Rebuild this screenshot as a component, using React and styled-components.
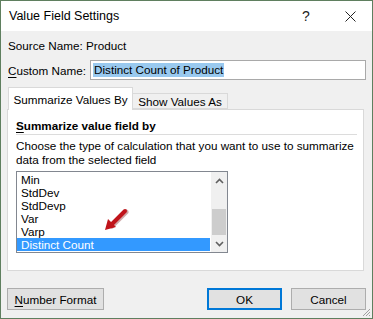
import React from 'react';
import styled, { createGlobalStyle } from 'styled-components';

const GlobalStyle = createGlobalStyle`
  html, body {
    margin: 0;
    padding: 0;
    background: #ffffff;
  }
  body {
    font-family: "Liberation Sans", Arial, sans-serif;
    font-size: 11.7px;
    color: #000000;
  }
`;

const Window = styled.div`
  width: 373px;
  height: 319px;
  box-sizing: border-box;
  border: 1px solid #5f7f5f;
  background: #f0f0f0;
  display: flex;
  flex-direction: column;
  position: relative;
  white-space: nowrap;
`;

const TitleBar = styled.div`
  height: 30px;
  background: #ffffff;
  display: flex;
  align-items: center;
  padding-left: 8px;
  font-size: 12.5px;
`;

const TitleText = styled.div`
  flex: 1;
`;

const TitleButton = styled.div`
  width: 44px;
  height: 30px;
  display: flex;
  align-items: center;
  justify-content: center;
  font-size: 14px;
  color: #222;
`;

const Body = styled.div`
  flex: 1;
  display: flex;
  flex-direction: column;
  padding: 0 6px;
`;

const FieldRow = styled.div`
  display: flex;
  align-items: center;
  height: ${p => p.h}px;
  margin-top: ${p => p.mt}px;
  padding-left: 1px;
`;

const Label = styled.div`
  width: ${p => p.w}px;
  flex-shrink: 0;
`;

const NameInput = styled.div`
  width: 276px;
  height: 20px;
  box-sizing: border-box;
  border: 1px solid #a9a9a9;
  background: #ffffff;
  display: flex;
  align-items: center;
  padding-left: 2px;
`;

const Selected = styled.span`
  background: #99c9ef;
  line-height: 14px;
  padding: 0 1px;
`;

const TabStrip = styled.div`
  display: flex;
  align-items: flex-end;
  height: 22px;
  margin-top: 7px;
  padding-left: 1px;
  position: relative;
  z-index: 1;
`;

const Tab = styled.div`
  box-sizing: border-box;
  width: ${p => p.w}px;
  height: ${p => (p.active ? 23 : 16)}px;
  margin-bottom: ${p => (p.active ? -1 : 0)}px;
  background: ${p => (p.active ? '#ffffff' : '#f0f0f0')};
  border: 1px solid #d9d9d9;
  border-bottom: ${p => (p.active ? 'none' : '1px solid #d9d9d9')};
  border-left: ${p => (p.first ? '1px solid #d9d9d9' : 'none')};
  display: flex;
  align-items: center;
  justify-content: center;
  padding-top: ${p => (p.active ? 0 : 1)}px;
`;

const Panel = styled.div`
  margin-right: 2px;
  height: 162px;
  box-sizing: border-box;
  background: #ffffff;
  border: 1px solid #d9d9d9;
  padding: 0 6px 0 8px;
  display: flex;
  flex-direction: column;
`;

const Heading = styled.div`
  font-weight: bold;
  height: 16px;
  margin-top: 7px;
  padding-bottom: 1px;
  border-bottom: 1px solid #dcdcdc;
  display: flex;
  align-items: center;
`;

const Description = styled.div`
  margin-top: 4px;
  line-height: 14px;
`;

const ListBox = styled.div`
  position: relative;
  margin-top: 4px;
  width: 212px;
  height: 82px;
  box-sizing: border-box;
  border: 1px solid #828790;
  display: flex;
`;

const Items = styled.div`
  flex: 1;
  padding-top: 1px;
  display: flex;
  flex-direction: column;
`;

const Item = styled.div`
  height: 13px;
  line-height: 13px;
  padding-left: 4px;
  background: ${p => (p.selected ? '#3399ff' : 'transparent')};
  color: ${p => (p.selected ? '#ffffff' : '#000000')};
  margin-right: 1px;
`;

const ScrollBar = styled.div`
  width: 16px;
  background: #f0f0f0;
  display: flex;
  flex-direction: column;
`;

const ScrollArrow = styled.div`
  height: 17px;
  display: flex;
  align-items: center;
  justify-content: center;
`;

const Track = styled.div`
  flex: 1;
  display: flex;
  flex-direction: column;
  justify-content: flex-end;
`;

const Thumb = styled.div`
  height: 26px;
  margin: 0 1px;
  background: #cdcdcd;
`;

const Pointer = styled.svg`
  position: absolute;
  left: 86px;
  top: 36px;
`;

const ButtonRow = styled.div`
  display: flex;
  align-items: center;
  margin-top: 17px;
`;

const Button = styled.div`
  box-sizing: border-box;
  width: ${p => p.w}px;
  height: 22px;
  margin-left: ${p => p.ml || 0}px;
  background: #e1e1e1;
  border: ${p => (p.primary ? '2px solid #0078d7' : '1px solid #adadad')};
  display: flex;
  align-items: center;
  justify-content: center;
`;

const Spacer = styled.div`
  flex: 1;
`;

const Grip = styled.svg`
  position: absolute;
  right: 1px;
  bottom: 1px;
`;

const Under = styled.span`
  text-decoration: underline;
  text-underline-offset: 2px;
`;

const Chevron = ({ up }) => (
  <svg width="9" height="6" viewBox="0 0 9 6">
    <path
      d={up ? 'M1 5 L4.5 1.5 L8 5' : 'M1 1 L4.5 4.5 L8 1'}
      fill="none"
      stroke="#606060"
      strokeWidth="1.6"
    />
  </svg>
);

const items = ['Min', 'StdDev', 'StdDevp', 'Var', 'Varp', 'Distinct Count'];

export default function App() {
  return (
    <>
      <GlobalStyle />
      <Window>
        <TitleBar>
          <TitleText>Value Field Settings</TitleText>
          <TitleButton>?</TitleButton>
          <TitleButton>
            <svg width="11" height="11" viewBox="0 0 11 11">
              <path d="M0.5 0.5 L10.5 10.5 M10.5 0.5 L0.5 10.5" stroke="#222" strokeWidth="1" />
            </svg>
          </TitleButton>
        </TitleBar>
        <Body>
          <FieldRow h={16} mt={6}>
            <Label w={78}>Source Name:</Label>
            <span>Product</span>
          </FieldRow>
          <FieldRow h={20} mt={7}>
            <Label w={82}><Under>C</Under>ustom Name:</Label>
            <NameInput>
              <Selected>Distinct Count of Product</Selected>
            </NameInput>
          </FieldRow>
          <TabStrip>
            <Tab w={125} active first>Summarize Values By</Tab>
            <Tab w={95}>Show Values As</Tab>
          </TabStrip>
          <Panel>
            <Heading><span><Under>S</Under>ummarize value field by</span></Heading>
            <Description>
              Choose the type of calculation that you want to use to summarize
              <br />
              data from the selected field
            </Description>
            <ListBox>
              <Items>
                {items.map(name => (
                  <Item key={name} selected={name === 'Distinct Count'}>{name}</Item>
                ))}
              </Items>
              <ScrollBar>
                <ScrollArrow><Chevron up /></ScrollArrow>
                <Track><Thumb /></Track>
                <ScrollArrow><Chevron /></ScrollArrow>
              </ScrollBar>
              <Pointer width="26" height="26" viewBox="0 0 26 26">
                <path d="M22 3 L8 17" stroke="#7a0c0c" strokeWidth="5" strokeLinecap="round" opacity="0.35" transform="translate(1,1)" />
                <path d="M22 3 L9 16" stroke="#c0141a" strokeWidth="4" strokeLinecap="round" />
                <path d="M2 22 L5 11 L13 19 Z" fill="#c0141a" />
              </Pointer>
            </ListBox>
          </Panel>
          <ButtonRow>
            <Button w={97}><span><Under>N</Under>umber Format</span></Button>
            <Spacer />
            <Button w={75} primary>OK</Button>
            <Button w={75} ml={9}>Cancel</Button>
          </ButtonRow>
        </Body>
        <Grip width="10" height="10" viewBox="0 0 10 10">
          <path d="M9 2 L2 9 M9 5 L5 9 M9 8 L8 9" stroke="#a0a0a0" strokeWidth="1" />
        </Grip>
      </Window>
    </>
  );
}
